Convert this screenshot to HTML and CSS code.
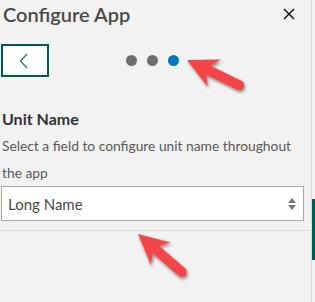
FILE: index.html
```html
<!DOCTYPE html>
<html lang="en">
  <head>
    <meta charset="UTF-8" />
    <title>Configure App</title>
    <link rel="stylesheet" href="styles.css">
  </head>
  <body>
    <div class="panel">
      <div class="header">
        <h1>Configure App</h1>
        <svg class="close" width="12" height="12" viewBox="0 0 12 12">
          <path d="M1 1 L11 11 M11 1 L1 11" stroke="#1e1e1e" stroke-width="1.6" />
        </svg>
      </div>

      <div class="nav">
        <button class="back">
          <svg width="10" height="16" viewBox="0 0 10 16">
            <polyline points="8,1 1.5,8 8,15" fill="none" stroke="#3f7c78" stroke-width="1.4" />
          </svg>
        </button>
        <div class="dots">
          <span class="dot"></span>
          <span class="dot"></span>
          <span class="dot active"></span>
        </div>
      </div>

      <div class="section">
        <h2>Unit Name</h2>
        <p>Select a field to configure unit name throughout the app</p>
        <div class="select">
          <span>Long Name</span>
          <svg width="10" height="14" viewBox="0 0 10 14">
            <polygon points="5,1 9,6 1,6" fill="#777" />
            <polygon points="1,8 9,8 5,13" fill="#777" />
          </svg>
        </div>
      </div>
      <div class="rule"></div>
    </div>
    <div class="edge"><div class="edge-bar"></div></div>

    <svg class="marks" width="315" height="302">
      <defs>
        <filter id="shadow" x="-30%" y="-30%" width="160%" height="160%">
          <feDropShadow dx="1" dy="2" stdDeviation="1.6" flood-color="#000" flood-opacity="0.45" />
        </filter>
      </defs>
      <g filter="url(#shadow)" fill="#f44448">
        <g transform="translate(187 60) rotate(25.7)">
          <polygon points="0,0 30,-15 24,-5 24,5 30,15" />
          <line x1="22" y1="0" x2="58" y2="0" stroke="#f44448" stroke-width="10" stroke-linecap="round" />
        </g>
        <g transform="translate(138 234) rotate(41)">
          <polygon points="0,0 30,-15 24,-5 24,5 30,15" />
          <line x1="22" y1="0" x2="58" y2="0" stroke="#f44448" stroke-width="10" stroke-linecap="round" />
        </g>
      </g>
    </svg>
  </body>
</html>
```

FILE: styles.css
```css
body {
  margin: 0;
  width: 315px;
  height: 302px;
  background-color: #f2f2f2;
  font-family: "Lato", "Noto Sans", sans-serif;
  display: flex;
  overflow: hidden;
}

.panel {
  width: 312px;
  height: 302px;
  border-right: 1px solid #dcdcdc;
  box-sizing: border-box;
}

.header {
  display: flex;
  justify-content: space-between;
  align-items: center;
  height: 28px;
  padding: 0 16px 0 3px;
}

h1 {
  margin: 0;
  font-size: 20px;
  font-weight: 600;
  color: #4a4a4a;
}

.close {
  margin-top: 0;
}

.nav {
  display: flex;
  align-items: center;
  margin-top: 16px;
  padding-left: 1px;
}

button.back {
  width: 48px;
  height: 33px;
  border: 2px solid #005c53;
  background-color: white;
  display: flex;
  align-items: center;
  justify-content: center;
  padding: 0 2px 0 0;
}

.dots {
  display: flex;
  gap: 10px;
  margin-left: 77px;
}

.dot {
  width: 11px;
  height: 11px;
  border-radius: 50%;
  background-color: #6e6e6e;
}

.dot.active {
  background-color: #0079c1;
}

.section {
  padding: 0 7px 0 1px;
  margin-top: 32px;
}

h2 {
  margin: 0 0 0 1px;
  font-size: 16px;
  font-weight: 700;
  color: #323232;
}

p {
  margin: 4px 0 0 1px;
  font-size: 13.8px;
  line-height: 27px;
  color: #595959;
}

.select {
  margin-top: 0;
  height: 35px;
  box-sizing: border-box;
  border: 1px solid #a9a9a9;
  background-color: white;
  display: flex;
  align-items: center;
  justify-content: space-between;
  padding: 0 6px 0 6px;
  font-size: 15px;
  color: #4a4a4a;
}

.rule {
  margin-top: 9px;
  border-top: 1px solid #dcdcdc;
}

.edge {
  flex: 1;
  padding-top: 199px;
}

.edge-bar {
  height: 61px;
  background-color: #005c53;
}

.marks {
  position: absolute;
  left: 0;
  top: 0;
}
```
